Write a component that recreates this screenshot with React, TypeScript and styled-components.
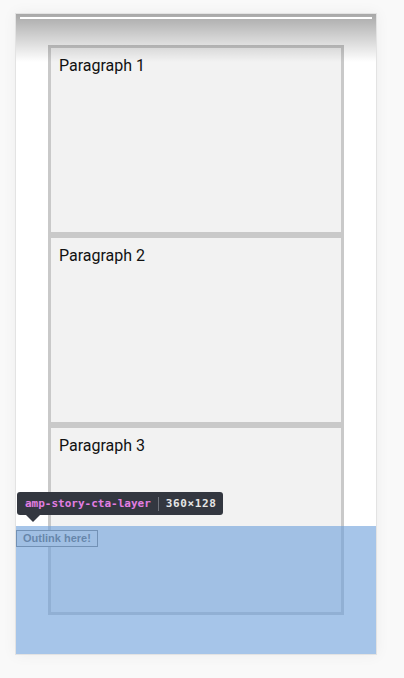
import React from "react";
import styled, { createGlobalStyle } from "styled-components";

const GlobalStyle = createGlobalStyle`
  html, body { margin: 0; padding: 0; background: #f9f9f9; }
  body { font-family: Roboto, "Noto Sans", sans-serif; }
`;

const Page = styled.div`
  padding: 13px 0 0 15px;
  width: 404px;
  height: 678px;
  box-sizing: border-box;
`;

const Frame = styled.div`
  position: relative;
  width: 360px;
  height: 640px;
  background: #ffffff;
  border: 1px solid #e3e3e3;
  box-shadow: 0 0 14px rgba(0, 0, 0, 0.05);
`;

const Content = styled.div`
  display: flex;
  flex-direction: column;
  padding: 31px 32px 0;
`;

const Box = styled.div`
  height: 190px;
  box-sizing: border-box;
  border: 3px solid #c9c9c9;
  background: #f2f2f2;
  padding: 8px 8px;
  font-family: Roboto, sans-serif;
  font-size: 16px;
  line-height: 20px;
  color: #111;
`;

const TopShade = styled.div`
  position: absolute;
  left: 0;
  right: 0;
  top: 0;
  height: 48px;
  background: linear-gradient(to bottom, rgba(0, 0, 0, 0.34), rgba(0, 0, 0, 0));
  padding: 3px 4px 0;
  box-sizing: border-box;
`;

const Progress = styled.div`
  height: 2px;
  background: #ffffff;
`;

const CtaLayer = styled.div`
  position: absolute;
  left: 0;
  right: 0;
  bottom: 0;
  height: 128px;
  padding-top: 1px;
  box-sizing: border-box;
`;

const Outlink = styled.button`
  font-family: "Liberation Sans", Arial, sans-serif;
  font-weight: bold;
  font-size: 11px;
  line-height: 13px;
  padding: 1px 6px;
  margin: 0;
  color: #5a5a5a;
  background: #efefef;
  border: 1px solid #767676;
  border-radius: 0;
`;

const Highlight = styled.div`
  position: absolute;
  inset: 0;
  background: rgba(111, 161, 220, 0.62);
`;

const Tooltip = styled.div`
  position: absolute;
  left: 1px;
  top: 478px;
  height: 23px;
  display: flex;
  align-items: center;
  padding: 0 7px 0 8px;
  background: #333740;
  border-radius: 3px;
  font-family: "DejaVu Sans Mono", monospace;
  font-size: 11px;
  font-weight: bold;
  white-space: nowrap;

  &::after {
    content: "";
    position: absolute;
    left: 9px;
    bottom: -7px;
    border-left: 7px solid transparent;
    border-right: 7px solid transparent;
    border-top: 7px solid #333740;
  }
`;

const Tag = styled.span`
  color: #e27ee2;
`;

const Sep = styled.span`
  width: 1px;
  height: 14px;
  background: #6f737b;
  margin: 0 7px;
`;

const Dim = styled.span`
  color: #e6e6e6;
  letter-spacing: 0.6px;
`;

export default function App() {
  return (
    <>
      <GlobalStyle />
      <Page>
        <Frame>
          <Content>
            <Box>Paragraph 1</Box>
            <Box>Paragraph 2</Box>
            <Box>Paragraph 3</Box>
          </Content>
          <TopShade>
            <Progress />
          </TopShade>
          <CtaLayer>
            <Outlink>Outlink here!</Outlink>
            <Highlight />
          </CtaLayer>
          <Tooltip>
            <Tag>amp-story-cta-layer</Tag>
            <Sep />
            <Dim>360×128</Dim>
          </Tooltip>
        </Frame>
      </Page>
    </>
  );
}
